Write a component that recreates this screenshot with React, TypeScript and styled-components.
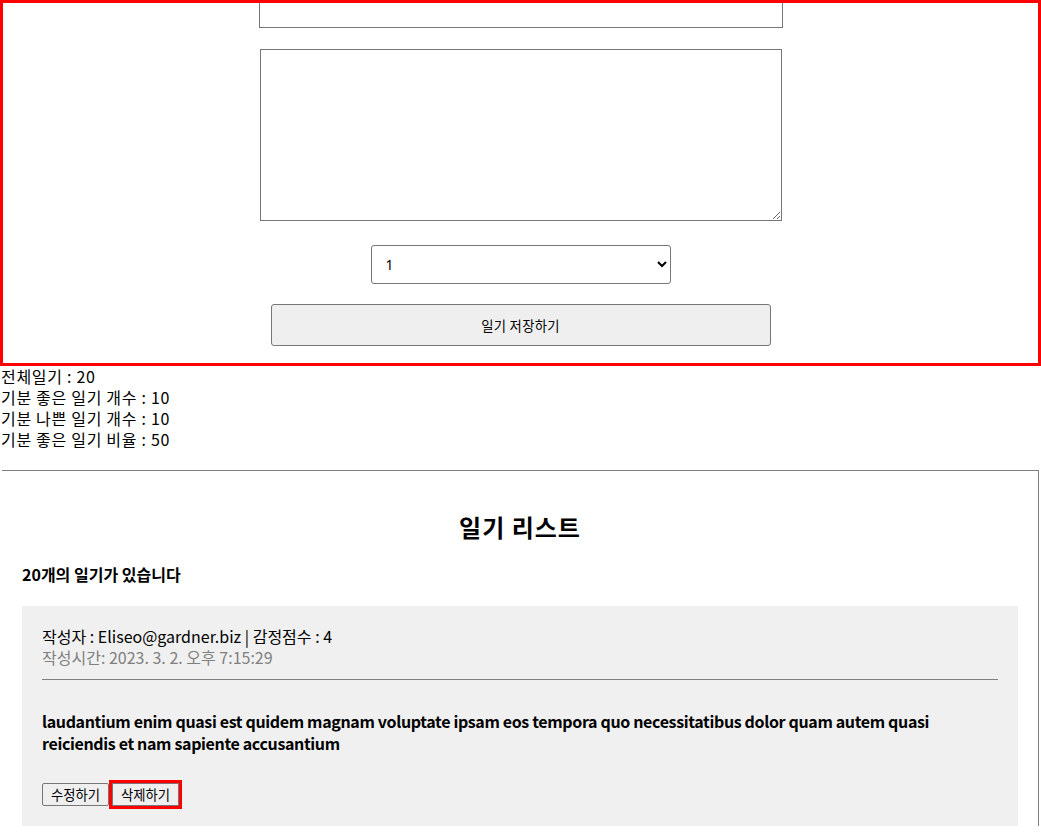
import React from "react";
import styled, { createGlobalStyle } from "styled-components";

const GlobalStyle = createGlobalStyle`
  html, body { margin: 0; padding: 0; background: #fff; }
  body {
    font-family: "Noto Sans CJK KR", "Noto Sans", sans-serif;
    font-size: 16px;
    color: #000;
    overflow: hidden;
  }
  * { box-sizing: border-box; }
`;

const Page = styled.div`
  width: 1041px;
  height: 833px;
  overflow: hidden;
`;

const Editor = styled.div`
  border: 3px solid #ff0000;
  height: 366px;
  overflow: hidden;
  display: flex;
  flex-direction: column;
  align-items: center;
`;

const AuthorInput = styled.input`
  width: 524px;
  height: 40px;
  margin-top: -15px;
  padding: 10px;
  border: 1px solid #767676;
  font-family: inherit;
  font-size: 13.33px;
`;

const ContentArea = styled.textarea`
  display: block;
  width: 522px;
  height: 172px;
  margin-top: 21px;
  padding: 10px;
  border: 1px solid #767676;
  font-family: inherit;
  font-size: 13.33px;
`;

const EmotionSelect = styled.select`
  width: 300px;
  height: 39px;
  margin-top: 24px;
  padding: 0 10px;
  border: 1px solid #767676;
  border-radius: 3px;
  background: #fff;
  font-family: "Noto Sans", sans-serif;
  font-size: 14px;
  color: #000;
`;

const SaveButton = styled.button`
  width: 500px;
  height: 42px;
  margin-top: 20px;
  border: 1px solid #767676;
  border-radius: 3px;
  background: #efefef;
  font-family: inherit;
  font-size: 13.33px;
  letter-spacing: 0.3px;
  color: #000;
`;

const Stats = styled.div`
  padding-left: 1px;
  line-height: 21px;
  letter-spacing: 0.7px;
`;

const StatLine = styled.div`
  white-space: nowrap;
`;

const ListBox = styled.div`
  margin: 20px 2px 0 2px;
  border-top: 1px solid #808080;
  border-right: 1px solid #808080;
  padding: 20px 20px 0 20px;
`;

const ListTitle = styled.h2`
  margin: 20px 0 21px;
  text-align: center;
  font-size: 24px;
  line-height: 32px;
  font-weight: 700;
  letter-spacing: 1px;
`;

const ListCount = styled.h4`
  margin: 0 0 21px;
  font-size: 16px;
  line-height: 21px;
  font-weight: 700;
`;

const Item = styled.div`
  background: #f0f0f0;
  padding: 20px;
  margin-bottom: 10px;
`;

const Info = styled.div`
  line-height: 21px;
`;

const DateText = styled.span`
  display: block;
  color: #808080;
`;

const Divider = styled.hr`
  margin: 11px 0 0;
  border: none;
  border-top: 1px solid #808080;
`;

const Content = styled.div`
  margin: 30px 0 29px;
  font-weight: 700;
  line-height: 22px;
  letter-spacing: -0.35px;
`;

const Actions = styled.div`
  display: flex;
  gap: 3px;
  align-items: center;
`;

const SmallButton = styled.button<{ $highlight?: boolean }>`
  height: 23px;
  padding: 0 8px;
  border: 1px solid #767676;
  border-radius: ${(p) => (p.$highlight ? "0" : "2px")};
  background: #efefef;
  font-family: inherit;
  font-size: 13.33px;
  color: #000;
  outline: ${(p) => (p.$highlight ? "3px solid #ff0000" : "none")};
`;

export default function App() {
  return (
    <Page>
      <GlobalStyle />
      <Editor>
        <AuthorInput defaultValue="" />
        <ContentArea defaultValue="" />
        <EmotionSelect defaultValue="1">
          <option value="1">1</option>
          <option value="2">2</option>
          <option value="3">3</option>
          <option value="4">4</option>
          <option value="5">5</option>
        </EmotionSelect>
        <SaveButton>일기 저장하기</SaveButton>
      </Editor>
      <Stats>
        <StatLine>전체일기 : 20</StatLine>
        <StatLine>기분 좋은 일기 개수 : 10</StatLine>
        <StatLine>기분 나쁜 일기 개수 : 10</StatLine>
        <StatLine>기분 좋은 일기 비율 : 50</StatLine>
      </Stats>
      <ListBox>
        <ListTitle>일기 리스트</ListTitle>
        <ListCount>20개의 일기가 있습니다</ListCount>
        <Item>
          <Info>
            <span>작성자 : Eliseo@gardner.biz | 감정점수 : 4</span>
            <DateText>작성시간: 2023. 3. 2. 오후 7:15:29</DateText>
          </Info>
          <Divider />
          <Content>
            laudantium enim quasi est quidem magnam voluptate ipsam eos tempora quo
            necessitatibus dolor quam autem quasi reiciendis et nam sapiente accusantium
          </Content>
          <Actions>
            <SmallButton>수정하기</SmallButton>
            <SmallButton $highlight>삭제하기</SmallButton>
          </Actions>
        </Item>
      </ListBox>
    </Page>
  );
}
